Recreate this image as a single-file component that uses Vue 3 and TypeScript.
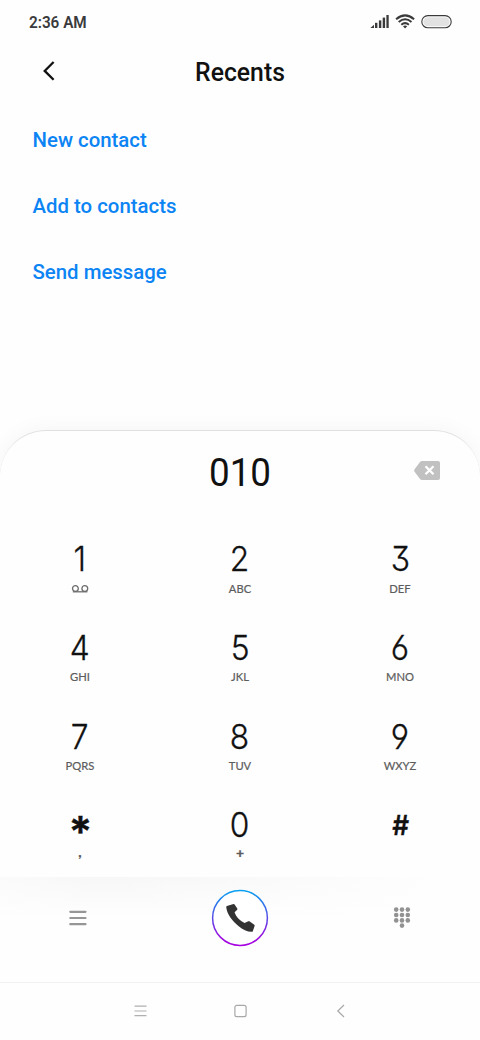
<script setup lang="ts">
interface Key {
  main: string
  sub?: string
  kind?: 'voicemail' | 'star' | 'zero' | 'hash'
}

const actions: string[] = ['New contact', 'Add to contacts', 'Send message']

const keys: Key[] = [
  { main: '1', kind: 'voicemail' },
  { main: '2', sub: 'ABC' },
  { main: '3', sub: 'DEF' },
  { main: '4', sub: 'GHI' },
  { main: '5', sub: 'JKL' },
  { main: '6', sub: 'MNO' },
  { main: '7', sub: 'PQRS' },
  { main: '8', sub: 'TUV' },
  { main: '9', sub: 'WXYZ' },
  { main: '*', sub: ',', kind: 'star' },
  { main: '0', sub: '+', kind: 'zero' },
  { main: '#', kind: 'hash' },
]

const dots: { x: number; y: number }[] = [
  ...[0, 1, 2].flatMap((r) => [0, 1, 2].map((c) => ({ x: 2.2 + c * 5.8, y: 2.2 + r * 5.4 }))),
  { x: 8, y: 18.2 },
]
</script>

<template>
  <div class="phone">
    <header class="status">
      <span class="time">2:36 AM</span>
      <svg class="status-icons" width="84" height="18" viewBox="0 0 84 18">
        <g fill="#3a3a3c">
          <path d="M0.4 15 L4 11.8 V15 Z" />
          <rect x="5" y="9.8" width="2.4" height="5.2" />
          <rect x="8.9" y="7.4" width="2.4" height="7.6" />
          <rect x="12.7" y="4.6" width="2.4" height="10.4" />
          <rect x="16.4" y="2" width="2.3" height="13" />
        </g>
        <g fill="none" stroke="#3a3a3c" stroke-width="2">
          <path d="M26.1 6.2 Q35.1 -1.5 44.1 6.2" />
          <path d="M28.7 9 Q35.1 3.5 41.5 9" />
          <path d="M31.3 11.7 Q35.1 8.6 38.9 11.7" />
        </g>
        <path d="M33 13.2 Q35.1 11.8 37.2 13.2 L35.1 15.5 Z" fill="#3a3a3c" />
        <rect x="51.8" y="2.6" width="29.4" height="12.2" rx="6.1" fill="#fff" stroke="#3a3a3c" stroke-width="1.1" />
        <rect x="53.4" y="4.2" width="26.2" height="9" rx="4.5" fill="#e2e2e2" />
      </svg>
    </header>

    <div class="titlebar">
      <svg class="back" width="14" height="22" viewBox="0 0 14 22">
        <path d="M11.6 2 L2.7 10.9 L11.6 19.8" fill="none" stroke="#111" stroke-width="2.3" />
      </svg>
      <h1>Recents</h1>
    </div>

    <nav class="actions">
      <a v-for="a in actions" :key="a">{{ a }}</a>
    </nav>

    <section class="sheet">
      <div class="display">
        <span class="number">010</span>
        <svg class="erase" width="26" height="19" viewBox="0 0 26 19">
          <path d="M8 0 H24 Q26 0 26 2 V17 Q26 19 24 19 H8 Q7 19 6.2 18.2 L0.6 10.8 Q-0.3 9.5 0.6 8.2 L6.2 0.8 Q7 0 8 0 Z" fill="#c1c1c1" />
          <path d="M11.5 5.3 L19.5 13.3 M19.5 5.3 L11.5 13.3" stroke="#fff" stroke-width="2.3" />
        </svg>
      </div>
      <div class="keypad">
        <div v-for="k in keys" :key="k.main" class="key" :class="k.kind">
          <span class="main">{{ k.main }}</span>
          <svg v-if="k.kind === 'voicemail'" class="vm" width="18" height="14" viewBox="0 0 18 14">
            <g fill="none" stroke="#6c6c6c" stroke-width="1.3">
              <circle cx="4.4" cy="6.5" r="2.9" />
              <circle cx="13.8" cy="6.5" r="2.9" />
              <path d="M1.8 9.8 H16.4" />
            </g>
          </svg>
          <span v-else-if="k.sub" class="sub">{{ k.sub }}</span>
        </div>
      </div>
    </section>

    <div class="toolbar">
      <svg width="160" height="30" viewBox="0 0 160 30">
        <path d="M70.3 8.8 H85.5 M70.3 15 H85.5 M70.3 21.2 H85.5" stroke="#969696" stroke-width="2.2" stroke-linecap="round" />
      </svg>
      <svg class="call" width="58" height="58" viewBox="0 0 58 58">
        <defs>
          <linearGradient id="ring" x1="0" y1="0" x2="0" y2="1">
            <stop offset="0" stop-color="#08a0f0" />
            <stop offset="0.5" stop-color="#5a4ce8" />
            <stop offset="0.85" stop-color="#9a10e0" />
            <stop offset="1" stop-color="#a800e0" />
          </linearGradient>
        </defs>
        <circle cx="29" cy="29" r="27.4" fill="#fff" stroke="url(#ring)" stroke-width="1.5" />
        <path d="M15.2 18 Q15.2 17.4 15.9 17.1 L22.6 15 Q23.2 14.9 23.6 15.4 L26.3 19.6 Q26.6 20.2 26.2 20.7 L23.6 23.3 C24.8 27.6 29 31.8 33.6 34.1 L37.3 32.3 Q37.9 32 38.4 32.3 L43.3 35.8 Q43.9 36.3 43.6 37 L41.8 42.2 Q41.4 42.9 40.7 42.8 C36 42.6 31.8 40.6 27.4 36.9 C21.5 31.9 16 25.6 15.2 18 Z" fill="#333" />
      </svg>
      <svg class="pad" width="160" height="30" viewBox="0 0 160 30">
        <g transform="translate(74 4.4)" fill="#929292">
          <circle v-for="(d, i) in dots" :key="i" :cx="d.x" :cy="d.y" r="2.3" />
        </g>
      </svg>
    </div>

    <footer class="navbar">
      <svg width="14" height="14" viewBox="0 0 14 14">
        <path d="M0.5 2.2 H12.5 M0.5 7 H12.5 M0.5 11.7 H12.5" stroke="#b0b0b0" stroke-width="1.2" />
      </svg>
      <svg width="14" height="14" viewBox="0 0 14 14">
        <rect x="0.9" y="1.3" width="11.2" height="11.4" rx="2" fill="none" stroke="#a8a8a8" stroke-width="1.2" />
      </svg>
      <svg width="14" height="14" viewBox="0 0 14 14">
        <path d="M10 1 L3.8 7 L10 13" fill="none" stroke="#a8a8a8" stroke-width="1.2" />
      </svg>
    </footer>
  </div>
</template>

<style>
body {
  margin: 0;
  background: #fefefe;
}
</style>

<style scoped>
.phone {
  width: 480px;
  height: 1040px;
  display: flex;
  flex-direction: column;
  overflow: hidden;
  background: #fefefe;
  font-family: Roboto, "Liberation Sans", sans-serif;
  color: #111;
}
.status {
  height: 44px;
  box-sizing: border-box;
  padding: 0 26.5px 0 29px;
  display: flex;
  align-items: center;
  justify-content: space-between;
  flex: none;
}
.time {
  font-size: 16px;
  font-weight: 600;
  color: #3a3a3c;
  transform: scaleX(0.955);
  transform-origin: left;
}
.titlebar {
  height: 56px;
  flex: none;
  display: grid;
  grid-template-columns: 60px 1fr 60px;
  align-items: center;
}
.back {
  margin: -2px 0 0 42px;
}
h1 {
  margin: 0;
  text-align: center;
  font-size: 25px;
  font-weight: 500;
  line-height: 33px;
  transform: scaleX(0.99);
}
.actions {
  height: 323px;
  padding-top: 7px;
  flex: none;
  display: flex;
  flex-direction: column;
}
.actions a {
  height: 66px;
  line-height: 66px;
  padding-left: 32.5px;
  font-size: 21px;
  font-weight: 500;
  color: #0c84f4;
  transform: scaleX(0.97);
  transform-origin: 33px 50%;
}
.sheet {
  height: 447px;
  box-sizing: border-box;
  flex: none;
  border-top: 1px solid #e0e0e0;
  border-radius: 46px 46px 0 0;
  background: #fefefe;
  box-shadow: 0 0 22px rgba(0, 0, 0, 0.045);
}
.display {
  height: 102px;
  padding: 0 40px;
  display: grid;
  grid-template-columns: 60px 1fr 60px;
}
.number {
  grid-column: 2;
  height: 84px;
  line-height: 84px;
  text-align: center;
  font-size: 38px;
  transform: scaleX(0.97);
}
.erase {
  justify-self: end;
  margin-top: 30px;
}
.keypad {
  display: grid;
  grid-template-columns: repeat(3, 1fr);
  grid-auto-rows: 88.8px;
}
.key {
  display: flex;
  flex-direction: column;
  align-items: center;
}
.main {
  height: 48.5px;
  line-height: 52px;
  font-family: Inter, Lato, sans-serif;
  font-size: 34.5px;
  font-weight: 300;
  font-feature-settings: "cv03", "cv04", "cv09";
  -webkit-text-stroke: 0.3px #111;
  transform: scaleX(0.92);
}
.sub {
  height: 14px;
  line-height: 13px;
  font-family: Lato, sans-serif;
  font-size: 11.2px;
  color: #5c5c5c;
  -webkit-text-stroke: 0.2px #5c5c5c;
}
.star .main {
  font-size: 42px;
  line-height: 65px;
  font-weight: 600;
  -webkit-text-stroke: 0.5px #111;
  transform: scaleX(1.03);
}
.hash .main {
  padding-left: 1px;
  font-size: 27px;
  line-height: 53px;
  font-weight: 600;
  transform: scaleX(0.97);
}
.star .sub,
.zero .sub {
  font-weight: 900;
  font-size: 14px;
}
.star .sub {
  line-height: 7px;
}
.zero .sub {
  line-height: 9px;
}
.toolbar {
  height: 105px;
  flex: none;
  display: grid;
  grid-template-columns: 160px 160px 160px;
  justify-items: center;
  align-items: center;
  background: linear-gradient(90deg, rgba(254, 254, 254, 0.5) 0, rgba(254, 254, 254, 0) 20%, rgba(254, 254, 254, 0.3) 50%, #fefefe 92%),
    linear-gradient(180deg, #f7f7f7 0, #fefefe 40px);
}
.toolbar svg {
  margin-top: -23px;
}
.navbar {
  height: 58px;
  box-sizing: border-box;
  flex: none;
  border-top: 1px solid #f1f1f1;
  display: flex;
  justify-content: center;
  align-items: center;
  gap: 86px;
  padding: 0 0 1px 1px;
}
</style>
